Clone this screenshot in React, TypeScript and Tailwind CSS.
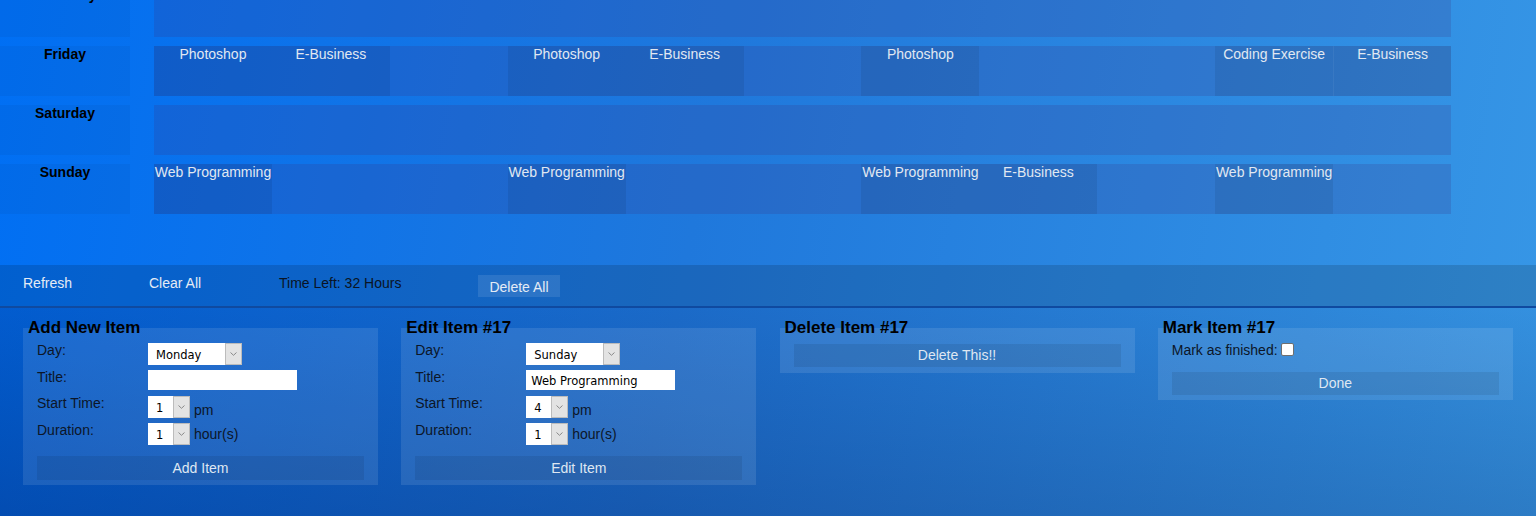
import React from "react"

type Ev = { col: string; title: string }

const schedule: { day: string; events: Ev[] }[] = [
  { day: "Thursday", events: [] },
  {
    day: "Friday",
    events: [
      { col: "col-start-1", title: "Photoshop" },
      { col: "col-start-2", title: "E-Business" },
      { col: "col-start-4", title: "Photoshop" },
      { col: "col-start-5", title: "E-Business" },
      { col: "col-start-7", title: "Photoshop" },
      { col: "col-start-10", title: "Coding Exercise" },
      { col: "col-start-11 border-l border-white/5", title: "E-Business" },
    ],
  },
  { day: "Saturday", events: [] },
  {
    day: "Sunday",
    events: [
      { col: "col-start-1", title: "Web Programming" },
      { col: "col-start-4", title: "Web Programming" },
      { col: "col-start-7", title: "Web Programming" },
      { col: "col-start-8", title: "E-Business" },
      { col: "col-start-10", title: "Web Programming" },
    ],
  },
]

const Arrow = () => (
  <span className="flex h-full w-[17px] shrink-0 items-center justify-center border border-[#bcbcbc] bg-[#e3e3e3]">
    <svg width="7" height="4" viewBox="0 0 7 4">
      <path d="M0.5 0.5 L3.5 3.3 L6.5 0.5" fill="none" stroke="#8a8a8a" strokeWidth="1" />
    </svg>
  </span>
)

const Select = ({ value, options, width }: { value: string; options: string[]; width: string }) => (
  <div className={`flex h-[22px] bg-white ${width}`}>
    <select
      defaultValue={value}
      className="h-full min-w-0 flex-1 appearance-none rounded-none bg-white pl-[8px] pt-[4px] font-['DejaVu_Sans',sans-serif] text-[11.5px] text-black outline-none"
    >
      {options.map((o) => (
        <option key={o}>{o}</option>
      ))}
    </select>
    <Arrow />
  </div>
)

const days = ["Monday", "Tuesday", "Wednesday", "Thursday", "Friday", "Saturday", "Sunday"]
const nums = ["1", "2", "3", "4", "5", "6", "7", "8"]

const Label = ({ children }: { children: React.ReactNode }) => (
  <div className="w-[111px] shrink-0 text-[14px] leading-[14px] text-[#0c1628]">{children}</div>
)

const Panel = ({ title, children, pb = "pb-[5px]" }: { title: string; children: React.ReactNode; pb?: string }) => (
  <div className="flex flex-col">
    <h3 className="relative z-10 h-[18px] pl-[5px] text-[17px] font-bold leading-[18px] text-black">{title}</h3>
    <div className={`-mt-[9px] w-[355px] bg-white/10 px-[14px] pt-[15px] ${pb}`}>{children}</div>
  </div>
)

const PanelButton = ({ label, h = "h-[24px]" }: { label: string; h?: string }) => (
  <button className={`w-full ${h} bg-black/[0.08] text-[14px] leading-[16px] text-[#dfe7f2]`}>{label}</button>
)

const ItemForm = ({ day, title, start, button }: { day: string; title: string; start: string; button: string }) => (
  <>
    <div className="flex h-[27px] items-start">
      <Label>Day:</Label>
      <Select value={day} options={days} width="w-[94px]" />
    </div>
    <div className="flex h-[26px] items-start">
      <Label>Title:</Label>
      <input
        defaultValue={title}
        className="h-[20px] w-[149px] bg-white pl-[5px] pt-[1px] font-['DejaVu_Sans',sans-serif] text-[11.5px] text-black outline-none"
      />
    </div>
    <div className="flex h-[27px] items-start">
      <Label>Start Time:</Label>
      <Select value={start} options={nums} width="w-[42px]" />
      <span className="ml-[4px] self-center text-[14px] leading-[16px] text-[#0c1628]">pm</span>
    </div>
    <div className="flex h-[22px] items-start">
      <Label>Duration:</Label>
      <Select value="1" options={nums} width="w-[42px]" />
      <span className="ml-[4px] self-center text-[14px] leading-[16px] text-[#0c1628]">hour(s)</span>
    </div>
    <div className="mt-[11px]">
      <PanelButton label={button} />
    </div>
  </>
)

export default function App() {
  return (
    <div className="h-[516px] w-[1536px] overflow-hidden bg-[linear-gradient(100deg,#006ff4_0%,#1f78dc_45%,#3797e6_100%)] font-['Liberation_Sans',Arial,sans-serif]">
      {/* week rows, scrolled so Thursday is cut at the top */}
      <div className="flex h-[265px] flex-col">
        <div className="-mt-[13px] flex flex-col gap-[9px]">
          {schedule.map((row) => (
            <div key={row.day} className="flex h-[50px]">
              <div className="w-[130px] bg-[rgba(20,30,90,0.06)] text-center text-[14px] font-bold leading-[16px] text-black">
                {row.day}
              </div>
              <div className="ml-[24px] grid w-[1297px] grid-cols-11 bg-[rgba(60,50,130,0.2)]">
                {row.events.map((ev, i) => (
                  <div
                    key={i}
                    className={`${ev.col} row-start-1 bg-black/[0.07] text-center text-[14px] leading-[16px] whitespace-nowrap text-[#e0e8f2]`}
                  >
                    {ev.title}
                  </div>
                ))}
              </div>
            </div>
          ))}
        </div>
      </div>

      {/* toolbar */}
      <div className="flex h-[43px] items-start border-b-2 border-[#0f4aa0] bg-black/[0.14] pl-[23px] pt-[10px] text-[14px] leading-[16px]">
        <span className="w-[126px] text-[#e4ebf5]">Refresh</span>
        <span className="w-[130px] text-[#e4ebf5]">Clear All</span>
        <span className="w-[199px] text-[#0a1424]">Time Left: 32 Hours</span>
        <button className="h-[22px] w-[82px] bg-white/10 pt-[1px] text-[#e4ebf5]">Delete All</button>
      </div>

      {/* item panels */}
      <div className="grid h-[208px] grid-cols-4 bg-[linear-gradient(to_top_right,rgba(0,10,60,0.35),rgba(0,10,60,0.04))] pl-[23px] pt-[11px]">
        <Panel title="Add New Item">
          <ItemForm day="Monday" title="" start="1" button="Add Item" />
        </Panel>
        <Panel title="Edit Item #17">
          <ItemForm day="Sunday" title="Web Programming" start="4" button="Edit Item" />
        </Panel>
        <Panel title="Delete Item #17" pb="pb-[6px]">
          <PanelButton label="Delete This!!" h="h-[23px]" />
        </Panel>
        <Panel title="Mark Item #17">
          <div className="flex h-[28px] items-start">
            <span className="text-[14px] leading-[14px] text-[#0c1628]">Mark as finished:</span>
            <input
              type="checkbox"
              className="ml-[3px] h-[13px] w-[13px] appearance-none rounded-[2px] border border-[#6f6f6f] bg-white"
            />
          </div>
          <PanelButton label="Done" h="h-[23px]" />
        </Panel>
      </div>
    </div>
  )
}
